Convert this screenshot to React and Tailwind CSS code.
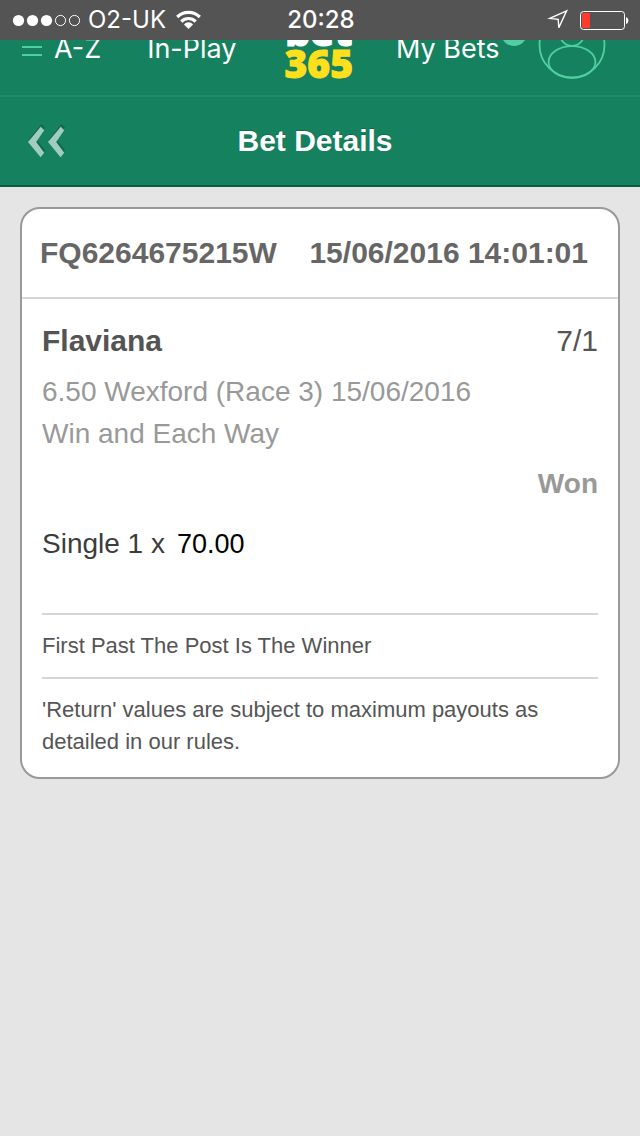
function SignalDots() {
  return (
    <svg className="h-6 w-[68px]" viewBox="0 0 68 24" aria-hidden="true">
      <g fill="#fff">
        <circle cx="6.5" cy="12.5" r="5.6" />
        <circle cx="20.5" cy="12.5" r="5.6" />
        <circle cx="34.5" cy="12.5" r="5.6" />
      </g>
      <g fill="none" stroke="#fff" strokeWidth="1">
        <circle cx="48.5" cy="12.5" r="5.1" />
        <circle cx="62.5" cy="12.5" r="5.1" />
      </g>
    </svg>
  );
}

function WifiIcon() {
  return (
    <svg className="h-6 w-7" viewBox="0 0 28 24" aria-hidden="true">
      <g fill="none" stroke="#fff" strokeWidth="3.2">
        <path d="M3.2 9 A16 16 0 0 1 25.8 9" />
        <path d="M7.3 13.5 A10.2 10.2 0 0 1 21.7 13.5" />
      </g>
      <path d="M14.5 21 L9.9 16.5 A6 6 0 0 1 19.1 16.5 Z" fill="#fff" />
    </svg>
  );
}

function LocationIcon() {
  return (
    <svg className="h-6 w-6" viewBox="0 0 24 24" aria-hidden="true">
      <path d="M20.6 2.8 L3.8 10.4 L12.2 11.3 L12.8 19.8 Z" fill="none" stroke="#fff" strokeWidth="1.4" />
    </svg>
  );
}

function BatteryIcon() {
  return (
    <svg className="h-6 w-[50px]" viewBox="0 0 50 24" aria-hidden="true">
      <rect x="0.5" y="3.5" width="44" height="18" rx="3" fill="none" stroke="#fff" />
      <rect x="2" y="5" width="8" height="15" rx="1" fill="#ff3b30" />
      <path d="M46 9 A3.2 3.6 0 0 1 46 16 Z" fill="#fff" />
    </svg>
  );
}

function StatusBar() {
  return (
    <div className="grid h-10 grid-cols-[1fr_auto_1fr] items-center bg-[#545454] pr-[10px] pl-3 font-['Inter',sans-serif] text-[24px] leading-10 text-white">
      <div className="flex items-center gap-2">
        <SignalDots />
        <span>O2-UK</span>
        <WifiIcon />
      </div>
      <time className="font-medium">20:28</time>
      <div className="flex items-center justify-end gap-[10px]">
        <LocationIcon />
        <BatteryIcon />
      </div>
    </div>
  );
}

function AccountIcon() {
  return (
    <svg className="h-[68px] w-[68px]" viewBox="0 0 68 68" fill="none" stroke="#50cfa0" strokeWidth="1.8" aria-hidden="true">
      <circle cx="34" cy="34" r="32.5" />
      <circle cx="34" cy="23" r="12" />
      <ellipse cx="34" cy="51" rx="23.4" ry="15.8" />
    </svg>
  );
}

function NavBar() {
  return (
    <nav className="flex h-[57px] items-end overflow-hidden border-b-2 border-[#268a69] pr-[34px] pl-[22px] font-['Inter',sans-serif] text-[27px] leading-8 text-white">
      <a href="#sports" className="flex items-center gap-3 pb-[30px]">
        <svg className="h-8 w-5" viewBox="0 0 20 32" stroke="#50cfa0" strokeWidth="1.8" aria-hidden="true">
          <path d="M0 6H20M0 14H20M0 22H20" />
        </svg>
        A-Z
      </a>
      <a href="#in-play" className="ml-[46px] pb-[30px]">In-Play</a>
      <a
        href="#home"
        className="ml-12 flex flex-col items-center pb-4 font-['Open_Sans',sans-serif] text-[39px] leading-8 font-extrabold"
      >
        <span className="[-webkit-text-stroke:1px_#fff]">bet</span>
        <span className="text-[#ffdf1b] [-webkit-text-stroke:1px_#ffdf1b]">365</span>
      </a>
      <a href="#my-bets" className="relative ml-[43px] pb-[30px]">
        My Bets
        <span className="absolute -right-[27px] bottom-[49px] h-[26px] w-[26px] rounded-full bg-[#50cfa0]" />
      </a>
      <a href="#account" aria-label="Account" className="ml-auto pb-[16px]">
        <AccountIcon />
      </a>
    </nav>
  );
}

function TitleBar() {
  return (
    <div className="grid h-[90px] grid-cols-[1fr_auto_1fr] items-center border-b-2 border-[#0f5a41] pr-[38px] pl-7 text-white">
      <button type="button" aria-label="Back" className="justify-self-start">
        <svg className="h-9 w-[38px]" viewBox="0 0 38 36" aria-hidden="true">
          <path
            d="M0.7 16.8L13.4 1L17 4.5L8.7 16.5L17 27.2L13.4 31.8ZM20.7 16.8L33.4 1L37 4.5L28.7 16.5L37 27.2L33.4 31.8Z"
            fill="#126a4e"
          />
          <path
            d="M0 19L12.8 3.7L16.2 7.2L8.2 19L16.2 29.7L12.6 34.2ZM20 19L32.8 3.7L36.2 7.2L28.2 19L36.2 29.7L32.6 34.2Z"
            fill="#a0cdbe"
          />
        </svg>
      </button>
      <h1 className="text-[30px] leading-8 font-bold [text-shadow:0_-1px_0_#126a4e]">Bet Details</h1>
    </div>
  );
}

export default function App() {
  return (
    <div className="min-h-screen bg-[#e5e5e5] font-['Liberation_Sans',Arial,sans-serif]">
      <StatusBar />
      <header className="bg-[#16815f]">
        <NavBar />
        <TitleBar />
      </header>
      <main className="p-5">
        <article className="rounded-[20px] border-2 border-[#999] bg-white">
          <header className="flex justify-between border-b-2 border-[#d5d5d5] py-7 pr-[30px] pl-[18px] text-[30px] leading-8 font-bold text-[#666]">
            <span>FQ6264675215W</span>
            <time>15/06/2016 14:01:01</time>
          </header>
          <div className="px-5 pt-[22px] pb-[19px]">
            <div className="flex justify-between text-[30px] leading-10 text-[#545454]">
              <h2 className="font-bold">Flaviana</h2>
              <span>7/1</span>
            </div>
            <div className="mt-[10px] text-[28px] leading-[42px] text-[#999]">
              <p>6.50 Wexford (Race 3) 15/06/2016</p>
              <p>Win and Each Way</p>
            </div>
            <p className="mt-2 text-right text-[28px] leading-[42px] font-bold text-[#999]">Won</p>
            <p className="mt-[18px] flex gap-3 text-[28px] leading-[42px] text-[#3c3c3c]">
              <span>Single 1 x</span>
              <span className="text-[27px] text-black">70.00</span>
            </p>
            <p className="mt-12 border-y-2 border-[#d5d5d5] py-[15px] text-[22px] leading-8 text-[#555]">
              First Past The Post Is The Winner
            </p>
            <p className="pt-[15px] text-[22px] leading-8 text-[#555]">
              'Return' values are subject to maximum payouts as detailed in our rules.
            </p>
          </div>
        </article>
      </main>
    </div>
  );
}
